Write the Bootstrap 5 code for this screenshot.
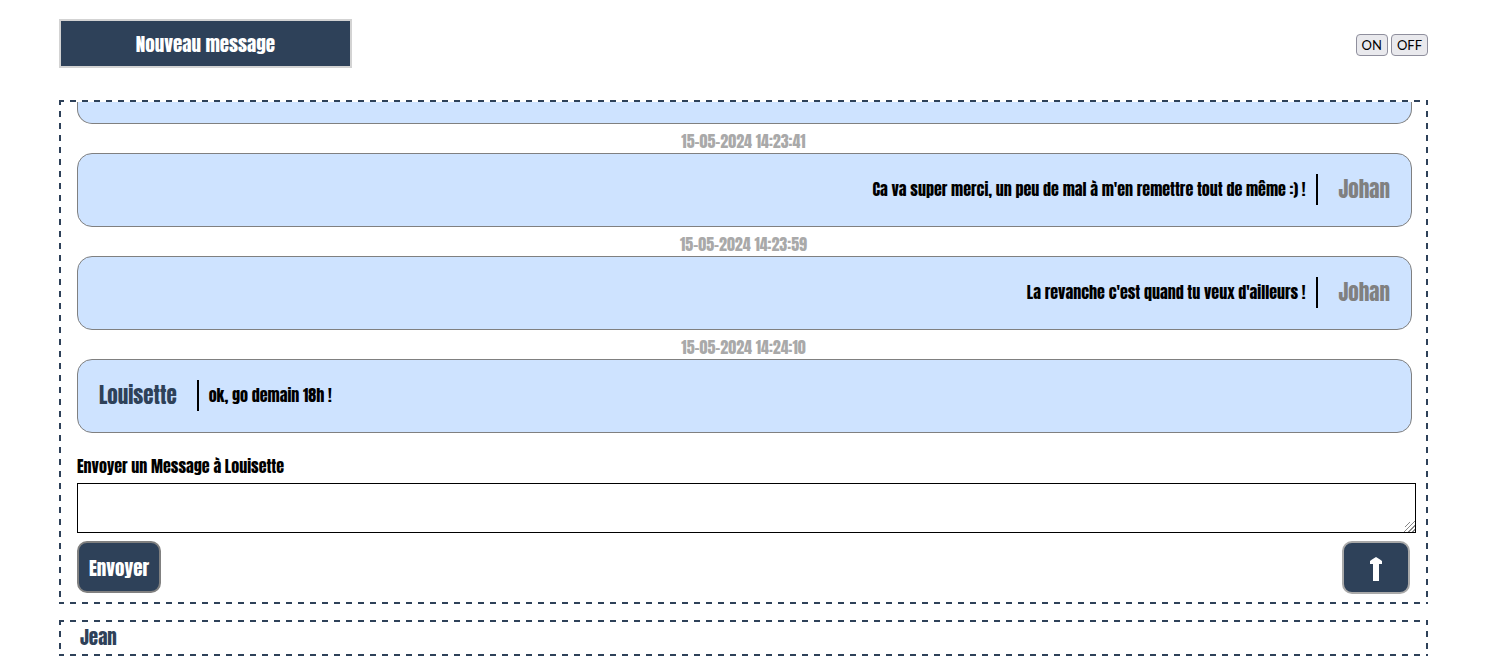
<!DOCTYPE html>
<html lang="fr">
<head>
<meta charset="utf-8">
<meta name="viewport" content="width=device-width, initial-scale=1">
<title>Messagerie</title>
<link href="https://cdn.jsdelivr.net/npm/bootstrap@5.3.0/dist/css/bootstrap.min.css" rel="stylesheet">
<style>
:root { --navy: #2e4159; --sky: #cee3ff; }
body { font-family: Anton, "Liberation Sans Narrow", "Liberation Sans", sans-serif; font-weight: 400; color: #000; background: #fff; }
.page { padding: 19px 70px 10px 59px; }
.new-message { width: 293px; height: 49px; border: 2px solid #d3d3d3; border-radius: 0; background: var(--navy); color: #fff; font-size: 19px; padding: 2px 0 0; }
.toggles { gap: 3px; padding-top: 2px; }
.toggle { font: 400 13px/18px Lato, sans-serif; background: #e9e9ed; color: #000; border: 1px solid #8f8f9d; border-radius: 4px; height: 22px; padding: 1px 5px; }
.dashed {
  --dash: var(--navy) 0 5px, transparent 5px 11px, var(--navy) 11px 12px;
  border: 2px solid transparent;
  background:
    repeating-linear-gradient(to right, var(--dash)) top / 100% 2px,
    repeating-linear-gradient(to right, var(--dash)) bottom / 100% 2px,
    repeating-linear-gradient(to bottom, var(--dash)) left / 2px 100%,
    repeating-linear-gradient(to bottom, var(--dash)) right / 2px 100%;
  background-repeat: no-repeat;
  background-origin: border-box;
}
.conversation { padding: 0 10px 8px 16px; }
.thread { margin-right: 4px; }
.bubble { min-height: 74px; padding: 0 21px; background: var(--sky); border: 1px solid gray; border-radius: 15px; }
.bubble-cut { min-height: 22px; border-top: 0; border-radius: 0 0 15px 15px; }
.stamp { display: block; height: 29px; padding: 5px 2px 0 0; line-height: 25px; font-size: 16px; color: #a9a9a9; text-align: center; }
.author { font-size: 21px; line-height: 32px; padding-bottom: 2px; color: gray; }
.author-peer { color: var(--navy); }
.body-text { font-size: 16px; line-height: 31px; margin-bottom: 1px; }
.sent { border-right: 2px solid #000; padding-right: 10px; margin-right: 21px; }
.received { border-left: 2px solid #000; padding-left: 10px; margin-left: 20px; }
.write-label { font-size: 16px; line-height: 24px; margin: 21px 0 5px; display: block; }
.write-box { display: block; height: 50px; border: 1px solid #000; resize: both; background: #fff; padding: 4px; }
.write-box::-webkit-resizer {
  background:
    linear-gradient(135deg, #fff 50%, transparent 50%),
    repeating-linear-gradient(135deg, #fff 0 1px, #888 1px 2px, #fff 2px 3px);
}
.send { height: 52px; width: 84px; border: 2px solid gray; border-radius: 10px; background: var(--navy); color: #fff; font-size: 19px; padding: 2px 0 0; }
.to-top { width: 68px; height: 53px; border: 2px solid #a9a9a9; border-radius: 10px; background: var(--navy); margin-right: 6px; padding: 2px 0 0; }
.contact { height: 36px; padding: 0 19px; font-size: 19px; line-height: 30px; }
.contact a { color: var(--navy); }
</style>
</head>
<body>
<main class="page">
  <header class="d-flex justify-content-between align-items-center mb-3 pb-3">
    <button type="button" class="new-message">Nouveau message</button>
    <div class="toggles d-flex">
      <button type="button" class="toggle">ON</button>
      <button type="button" class="toggle">OFF</button>
    </div>
  </header>

  <section class="dashed conversation mb-3">
    <div class="thread">
      <div class="bubble bubble-cut"></div>
      <time class="stamp">15-05-2024 14:23:41</time>
      <div class="bubble d-flex align-items-center justify-content-end">
        <span class="body-text sent">Ca va super merci, un peu de mal à m'en remettre tout de même :) !</span>
        <span class="author">Johan</span>
      </div>
      <time class="stamp">15-05-2024 14:23:59</time>
      <div class="bubble d-flex align-items-center justify-content-end">
        <span class="body-text sent">La revanche c'est quand tu veux d'ailleurs !</span>
        <span class="author">Johan</span>
      </div>
      <time class="stamp">15-05-2024 14:24:10</time>
      <div class="bubble d-flex align-items-center">
        <span class="author author-peer">Louisette</span>
        <span class="body-text received">ok, go demain 18h !</span>
      </div>
    </div>
    <form>
      <label class="write-label" for="message">Envoyer un Message à Louisette</label>
      <textarea id="message" class="write-box w-100 mb-2"></textarea>
      <div class="d-flex justify-content-between align-items-start">
        <button type="button" class="send">Envoyer</button>
        <button type="button" class="to-top" aria-label="Haut de page">
          <svg width="12" height="24" viewBox="0 0 12 24" fill="#fff" aria-hidden="true"><path d="M6 0 10 2.500 12 4V7H9V24H3V7H0V4L2 2.500Z"/></svg>
        </button>
      </div>
    </form>
  </section>

  <section class="dashed contact"><a href="#" class="text-decoration-none">Jean</a></section>
</main>
<script src="https://cdn.jsdelivr.net/npm/bootstrap@5.3.0/dist/js/bootstrap.bundle.min.js"></script>
</body>
</html>
